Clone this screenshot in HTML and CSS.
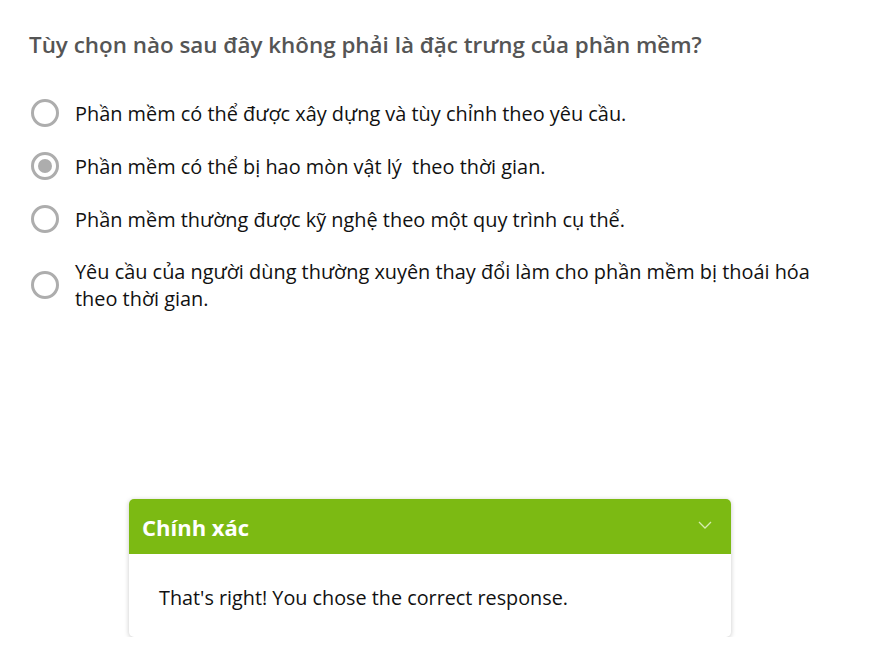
FILE: index.html
```html
<!DOCTYPE html>
<html lang="vi">
<head>
<meta charset="utf-8">
<link rel="stylesheet" href="styles.css">
</head>
<body>
<div class="page">
  <h1 class="question">Tùy chọn nào sau đây không phải là đặc trưng của phần mềm?</h1>
  <ul class="options">
    <li class="option"><span class="radio"></span><span class="label">Phần mềm có thể được xây dựng và tùy chỉnh theo yêu cầu.</span></li>
    <li class="option"><span class="radio checked"></span><span class="label">Phần mềm có thể bị hao mòn vật lý &nbsp;theo thời gian.</span></li>
    <li class="option"><span class="radio"></span><span class="label">Phần mềm thường được kỹ nghệ theo một quy trình cụ thể.</span></li>
    <li class="option"><span class="radio"></span><span class="label">Yêu cầu của người dùng thường xuyên thay đổi làm cho phần mềm bị thoái hóa theo thời gian.</span></li>
  </ul>
  <div class="feedback">
    <div class="fb-head">
      <span class="fb-title">Chính xác</span>
      <svg class="chev" width="14" height="8" viewBox="0 0 14 8"><path d="M1 1 L7 7 L13 1" fill="none" stroke="#d6ecb0" stroke-width="1.3"/></svg>
    </div>
    <div class="fb-body">That's right! You chose the correct response.</div>
  </div>
</div>
</body>
</html>
```

FILE: styles.css
```css
html, body {
  margin: 0;
  padding: 0;
  background: #fff;
}
body {
  font-family: "Open Sans", "Noto Sans", sans-serif;
  color: #111;
}
.page {
  padding: 30px 29px 0 29px;
  display: flex;
  flex-direction: column;
}
.question {
  margin: 0;
  font-size: 22.4px;
  font-weight: 600;
  color: #555;
  line-height: 30px;
}
.options {
  list-style: none;
  margin: 39px 0 0 0;
  padding: 0;
  display: flex;
  flex-direction: column;
  gap: 25px;
}
.option {
  display: flex;
  align-items: center;
  gap: 16px;
  padding-left: 2px;
}
.radio {
  flex: none;
  width: 22px;
  height: 22px;
  border: 3px solid #adadad;
  border-radius: 50%;
  display: flex;
  align-items: center;
  justify-content: center;
}
.radio.checked::after {
  content: "";
  width: 14px;
  height: 14px;
  border-radius: 50%;
  background: #adadad;
}
.label {
  font-size: 19.9px;
  line-height: 27px;
  color: #111;
  max-width: 760px;
}
.feedback {
  margin: 187px 0 0 100px;
  width: 602px;
  border-radius: 5px;
  overflow: hidden;
  box-shadow: 0 1px 5px rgba(0,0,0,0.22);
  background: #fff;
}
.fb-head {
  background: #7cba13;
  height: 55px;
  display: flex;
  align-items: center;
  justify-content: space-between;
  padding: 0 19px 0 13px;
}
.fb-title {
  color: #fff;
  font-weight: 700;
  font-size: 22px;
}
.chev {
  margin-top: -4px;
}
.fb-body {
  padding: 30px 30px 26px 30px;
  font-size: 19.8px;
  line-height: 27px;
  color: #111;
}
```
